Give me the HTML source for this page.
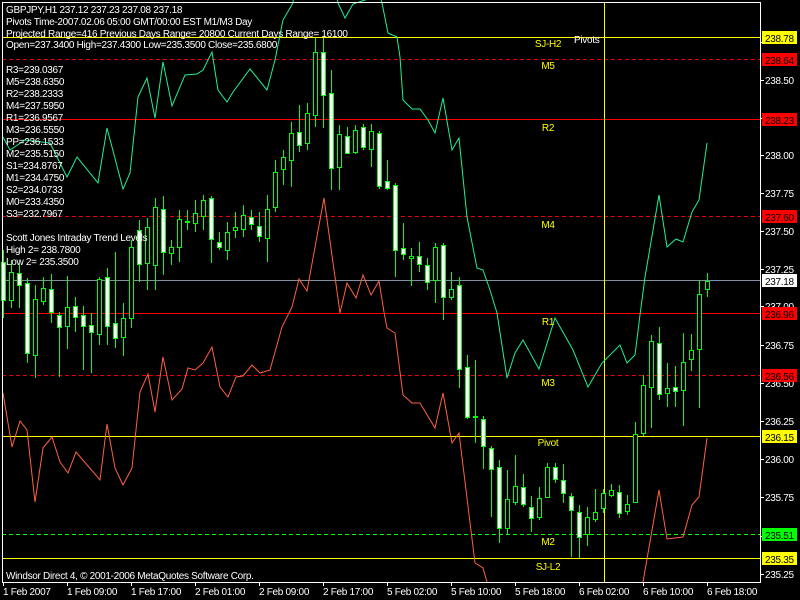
<!DOCTYPE html>
<html><head><meta charset="utf-8"><style>
html,body{margin:0;padding:0;background:#000;width:800px;height:600px;overflow:hidden}
svg{display:block}
text{font-family:"Liberation Sans",sans-serif;font-size:10px;letter-spacing:-0.3px}
.p{letter-spacing:-0.2px}
</style></head><body>
<svg width="800" height="600" viewBox="0 0 800 600" xmlns="http://www.w3.org/2000/svg" shape-rendering="crispEdges">
<rect width="800" height="600" fill="#000"/>
<!-- levels -->
<rect x="2" y="37" width="758" height="1" fill="#ff0"/>
<line x1="2" y1="59.5" x2="760" y2="59.5" stroke="#e00" stroke-dasharray="4,3"/>
<rect x="2" y="119" width="758" height="1" fill="#f00"/>
<line x1="2" y1="216.5" x2="760" y2="216.5" stroke="#e00" stroke-dasharray="4,3"/>
<rect x="2" y="280" width="758" height="1" fill="#8090a0"/>
<rect x="2" y="313" width="758" height="1" fill="#f00"/>
<line x1="2" y1="375.5" x2="760" y2="375.5" stroke="#e00" stroke-dasharray="4,3"/>
<rect x="2" y="436" width="758" height="1" fill="#ff0"/>
<line x1="2" y1="534.5" x2="760" y2="534.5" stroke="#0f0" stroke-dasharray="4,3"/>
<rect x="2" y="558" width="758" height="1" fill="#ff0"/>
<rect x="604" y="2" width="1" height="580" fill="#ff0"/>
<!-- curves -->
<g fill="none" stroke-width="1" shape-rendering="auto">
<polyline stroke="#20f090" points="3,137 10,150 25,140 50,143 67,177 77,157 98,183 107,128 123,189 130,173 138,97 147,78 155,118 163,62 172,106 185,75 197,74 203,70 212,52 218,90 227,102 233,92 250,69 267,90 275,60 283,20 293,3 294,-10 336,-10 338,3 345,18 353,4 380,-5 382,3 388,33 397,37 400,57 403,100 412,109 420,109 428,120 435,133 443,98 452,150 459,138 467,217 477,268 483,270 490,290 497,313 507,378 515,353 523,340 539,369 555,318 573,350 588,387 602,363 620,345 627,363 635,355 640,315 645,277 659,195 667,247 676,239 683,242 692,212 699,200 707,143"/>
<polyline stroke="#ff6040" points="3,393 12,447 20,421 27,430 35,502 43,448 52,437 60,462 68,473 76,452 100,480 107,424 115,468 123,485 132,468 140,392 148,374 155,412 163,357 172,400 182,389 188,368 195,370 203,363 212,347 220,387 228,397 236,377 243,376 252,365 260,373 270,370 282,327 292,307 299,279 307,291 324,198 335,277 340,313 347,283 356,298 363,275 371,295 379,281 384,312 387,328 395,333 403,395 412,403 420,403 435,428 443,393 452,443 459,433 475,563 483,568 487,582"/>
<polyline stroke="#ff6040" points="643,582 659,490 667,539 683,537 692,505 699,497 707,438"/>
</g>
<!-- wicks -->
<path stroke="#0f0" stroke-width="1" fill="none" d="M3.5 250V318M11.5 260V308M19.5 263V308M27.5 278V363M35.5 285V378M43.5 277V305M51.5 274V323M59.5 312V377M67.5 276V349M75.5 297V332M83.5 306V370M91.5 313V373M99.5 277V345M107.5 268V345M115.5 252V348M123.5 303V356M131.5 240V328M139.5 220V282M147.5 218V290M155.5 198V290M163.5 196V275M171.5 240V265M179.5 210V262M187.5 210V230M195.5 200V232M203.5 195V230M211.5 196V263M219.5 232V250M227.5 222V260M235.5 212V238M243.5 205V237M251.5 210V230M259.5 212V242M267.5 195V262M275.5 160V212M283.5 150V185M291.5 122V187M299.5 105V152M307.5 103V150M315.5 38V127M323.5 38V128M331.5 70V190M339.5 125V190M347.5 127V154M355.5 125V154M363.5 124V150M371.5 124V167M379.5 131V189M387.5 160V190M395.5 183V277M403.5 223V260M411.5 248V286M419.5 242V272M427.5 258V290M435.5 243V303M443.5 243V320M451.5 272V300M459.5 277V388M467.5 355V419M475.5 360V443M483.5 416V469M491.5 446V517M499.5 460V543M507.5 470V535M515.5 455V505M523.5 474V507M531.5 496V532M539.5 487V520M547.5 463V498M555.5 463V483M563.5 464V503M571.5 493V557M579.5 505V558M587.5 507V546M595.5 489V522M603.5 489V513M611.5 484V497M619.5 485V518M627.5 495V515M635.5 422V503M643.5 375V436M651.5 335V428M659.5 327V400M667.5 363V407M675.5 366V407M683.5 333V426M691.5 334V371M699.5 280V408M707.5 273V297"/>
<!-- bodies -->
<g stroke="#0f0" stroke-width="1">
<g fill="#fff">
<rect x="1.5" y="262.5" width="4" height="38"/><rect x="17.5" y="273.5" width="4" height="12"/><rect x="25.5" y="283.5" width="4" height="70"/><rect x="49.5" y="289.5" width="4" height="23"/><rect x="57.5" y="315.5" width="4" height="12"/><rect x="73.5" y="306.5" width="4" height="11"/><rect x="81.5" y="315.5" width="4" height="11"/><rect x="89.5" y="325.5" width="4" height="7"/><rect x="105.5" y="277.5" width="4" height="49"/><rect x="113.5" y="323.5" width="4" height="15"/><rect x="137.5" y="230.5" width="4" height="34"/><rect x="161.5" y="209.5" width="4" height="43"/><rect x="209.5" y="198.5" width="4" height="41"/><rect x="217.5" y="242.5" width="4" height="5"/><rect x="249.5" y="217.5" width="4" height="7"/><rect x="257.5" y="226.5" width="4" height="10"/><rect x="297.5" y="132.5" width="4" height="13"/><rect x="321.5" y="52.5" width="4" height="43"/><rect x="329.5" y="93.5" width="4" height="75"/><rect x="345.5" y="136.5" width="4" height="17"/><rect x="361.5" y="127.5" width="4" height="20"/><rect x="377.5" y="133.5" width="4" height="53"/><rect x="385.5" y="181.5" width="4" height="7"/><rect x="393.5" y="185.5" width="4" height="65"/><rect x="401.5" y="248.5" width="4" height="6"/><rect x="417.5" y="256.5" width="4" height="8"/><rect x="425.5" y="265.5" width="4" height="17"/><rect x="441.5" y="245.5" width="4" height="52"/><rect x="457.5" y="285.5" width="4" height="84"/><rect x="465.5" y="367.5" width="4" height="50"/><rect x="481.5" y="419.5" width="4" height="27"/><rect x="489.5" y="448.5" width="4" height="21"/><rect x="497.5" y="467.5" width="4" height="61"/><rect x="521.5" y="487.5" width="4" height="17"/><rect x="529.5" y="507.5" width="4" height="11"/><rect x="553.5" y="467.5" width="4" height="12"/><rect x="561.5" y="480.5" width="4" height="13"/><rect x="569.5" y="496.5" width="4" height="14"/><rect x="577.5" y="512.5" width="4" height="25"/><rect x="617.5" y="492.5" width="4" height="21"/><rect x="657.5" y="343.5" width="4" height="51"/><rect x="673.5" y="387.5" width="4" height="4"/>
</g>
<g fill="#000">
<rect x="9.5" y="272.5" width="4" height="28"/><rect x="33.5" y="299.5" width="4" height="56"/><rect x="41.5" y="288.5" width="4" height="13"/><rect x="65.5" y="307.5" width="4" height="19"/><rect x="97.5" y="279.5" width="4" height="55"/><rect x="121.5" y="318.5" width="4" height="19"/><rect x="129.5" y="247.5" width="4" height="71"/><rect x="145.5" y="227.5" width="4" height="36"/><rect x="153.5" y="207.5" width="4" height="58"/><rect x="169.5" y="247.5" width="4" height="6"/><rect x="177.5" y="219.5" width="4" height="28"/><rect x="185.5" y="221.5" width="4" height="1"/><rect x="193.5" y="213.5" width="4" height="10"/><rect x="201.5" y="200.5" width="4" height="16"/><rect x="225.5" y="232.5" width="4" height="18"/><rect x="233.5" y="227.5" width="4" height="3"/><rect x="241.5" y="215.5" width="4" height="14"/><rect x="265.5" y="209.5" width="4" height="29"/><rect x="273.5" y="172.5" width="4" height="35"/><rect x="281.5" y="157.5" width="4" height="12"/><rect x="289.5" y="133.5" width="4" height="27"/><rect x="305.5" y="113.5" width="4" height="30"/><rect x="313.5" y="52.5" width="4" height="63"/><rect x="337.5" y="134.5" width="4" height="33"/><rect x="353.5" y="130.5" width="4" height="22"/><rect x="369.5" y="131.5" width="4" height="18"/><rect x="409.5" y="256.5" width="4" height="2"/><rect x="433.5" y="247.5" width="4" height="33"/><rect x="449.5" y="289.5" width="4" height="8"/><rect x="473.5" y="416.5" width="4" height="1"/><rect x="505.5" y="499.5" width="4" height="29"/><rect x="513.5" y="486.5" width="4" height="16"/><rect x="537.5" y="498.5" width="4" height="19"/><rect x="545.5" y="467.5" width="4" height="30"/><rect x="585.5" y="517.5" width="4" height="17"/><rect x="593.5" y="512.5" width="4" height="7"/><rect x="601.5" y="493.5" width="4" height="15"/><rect x="609.5" y="490.5" width="4" height="5"/><rect x="625.5" y="504.5" width="4" height="7"/><rect x="633.5" y="434.5" width="4" height="68"/><rect x="641.5" y="385.5" width="4" height="48"/><rect x="649.5" y="341.5" width="4" height="46"/><rect x="665.5" y="388.5" width="4" height="5"/><rect x="681.5" y="362.5" width="4" height="28"/><rect x="689.5" y="350.5" width="4" height="9"/><rect x="697.5" y="294.5" width="4" height="55"/><rect x="705.5" y="281.5" width="4" height="8"/>
</g>
</g>
<!-- frame -->
<g fill="#fff">
<rect x="2" y="2" width="1" height="581"/>
<rect x="2" y="2" width="759" height="1"/>
<rect x="760" y="2" width="1" height="581"/>
<rect x="2" y="582" width="759" height="1"/>
</g>
<g stroke="#fff" fill="none">
<path d="M760 42.5h4M760 80.5h4M760 118.5h4M760 155.5h4M760 193.5h4M760 231.5h4M760 269.5h4M760 306.5h4M760 345.5h4M760 383.5h4M760 421.5h4M760 459.5h4M760 497.5h4M760 536.5h4M760 574.5h4"/>
<path d="M3.5 582v4M67.5 582v4M131.5 582v4M195.5 582v4M259.5 582v4M323.5 582v4M387.5 582v4M451.5 582v4M515.5 582v4M579.5 582v4M643.5 582v4M707.5 582v4"/>
</g>
<!-- level labels -->
<g fill="#ff0" text-anchor="middle">
<text x="548" y="47">SJ-H2</text><text x="548" y="69">M5</text><text x="548" y="131">R2</text><text x="548" y="228">M4</text><text x="548" y="325">R1</text><text x="548" y="386">M3</text><text x="548" y="446">Pivot</text><text x="548" y="545">M2</text><text x="548" y="570">SJ-L2</text>
</g>
<text x="574" y="43" fill="#fff">Pivots</text>
<!-- info text -->
<g fill="#fff">
<text x="6" y="13">GBPJPY,H1  237.12 237.23 237.08 237.18</text>
<text x="6" y="25">Pivots Time-2007.02.06 05:00 GMT/00:00 EST M1/M3 Day</text>
<text x="6" y="37">Projected Range=416 Previous Days Range= 20800 Current Days Range= 16100</text>
<text x="6" y="48">Open=237.3400 High=237.4300 Low=235.3500 Close=235.6800</text>
<text x="6" y="73">R3=239.0367</text><text x="6" y="85">M5=238.6350</text><text x="6" y="97">R2=238.2333</text><text x="6" y="109">M4=237.5950</text><text x="6" y="121">R1=236.9567</text><text x="6" y="133">M3=236.5550</text><text x="6" y="145">PP=236.1533</text><text x="6" y="157">M2=235.5150</text><text x="6" y="169">S1=234.8767</text><text x="6" y="181">M1=234.4750</text><text x="6" y="193">S2=234.0733</text><text x="6" y="205">M0=233.4350</text><text x="6" y="217">S3=232.7967</text>
<text x="6" y="241">Scott Jones Intraday Trend Levels</text>
<text x="6" y="253">High 2= 238.7800</text>
<text x="6" y="265">Low 2= 235.3500</text>
<text x="6" y="579">Windsor Direct 4, © 2001-2006 MetaQuotes Software Corp.</text>
<text x="3" y="595">1 Feb 2007</text><text x="67" y="595">1 Feb 09:00</text><text x="131" y="595">1 Feb 17:00</text><text x="195" y="595">2 Feb 01:00</text><text x="259" y="595">2 Feb 09:00</text><text x="323" y="595">2 Feb 17:00</text><text x="387" y="595">5 Feb 02:00</text><text x="451" y="595">5 Feb 10:00</text><text x="515" y="595">5 Feb 18:00</text><text x="579" y="595">6 Feb 02:00</text><text x="643" y="595">6 Feb 10:00</text><text x="707" y="595">6 Feb 18:00</text>
<g class="p">
<text x="765" y="84">238.50</text><text x="765" y="159">238.00</text><text x="765" y="197">237.75</text><text x="765" y="235">237.50</text><text x="765" y="273">237.25</text><text x="765" y="310">237.00</text><text x="765" y="349">236.75</text><text x="765" y="387">236.50</text><text x="765" y="425">236.25</text><text x="765" y="463">236.00</text><text x="765" y="501">235.75</text><text x="765" y="578">235.25</text>
</g>
</g>
<!-- price boxes -->
<g class="p">
<rect x="762" y="31" width="35" height="13" fill="#ff0"/><text x="765" y="42" fill="#000">238.78</text>
<rect x="762" y="53" width="35" height="13" fill="#f00"/><text x="765" y="64" fill="#000">238.64</text>
<rect x="762" y="113" width="35" height="13" fill="#f00"/><text x="765" y="124" fill="#000">238.23</text>
<rect x="762" y="210" width="35" height="13" fill="#f00"/><text x="765" y="221" fill="#000">237.60</text>
<rect x="762" y="274" width="35" height="13" fill="#fff"/><text x="765" y="285" fill="#000">237.18</text>
<rect x="762" y="307" width="35" height="13" fill="#f00"/><text x="765" y="318" fill="#000">236.96</text>
<rect x="762" y="369" width="35" height="13" fill="#f00"/><text x="765" y="380" fill="#000">236.56</text>
<rect x="762" y="430" width="35" height="13" fill="#ff0"/><text x="765" y="441" fill="#000">236.15</text>
<rect x="762" y="528" width="35" height="13" fill="#0f0"/><text x="765" y="539" fill="#000">235.51</text>
<rect x="762" y="552" width="35" height="13" fill="#ff0"/><text x="765" y="563" fill="#000">235.35</text>
</g>
</svg>
</body></html>
